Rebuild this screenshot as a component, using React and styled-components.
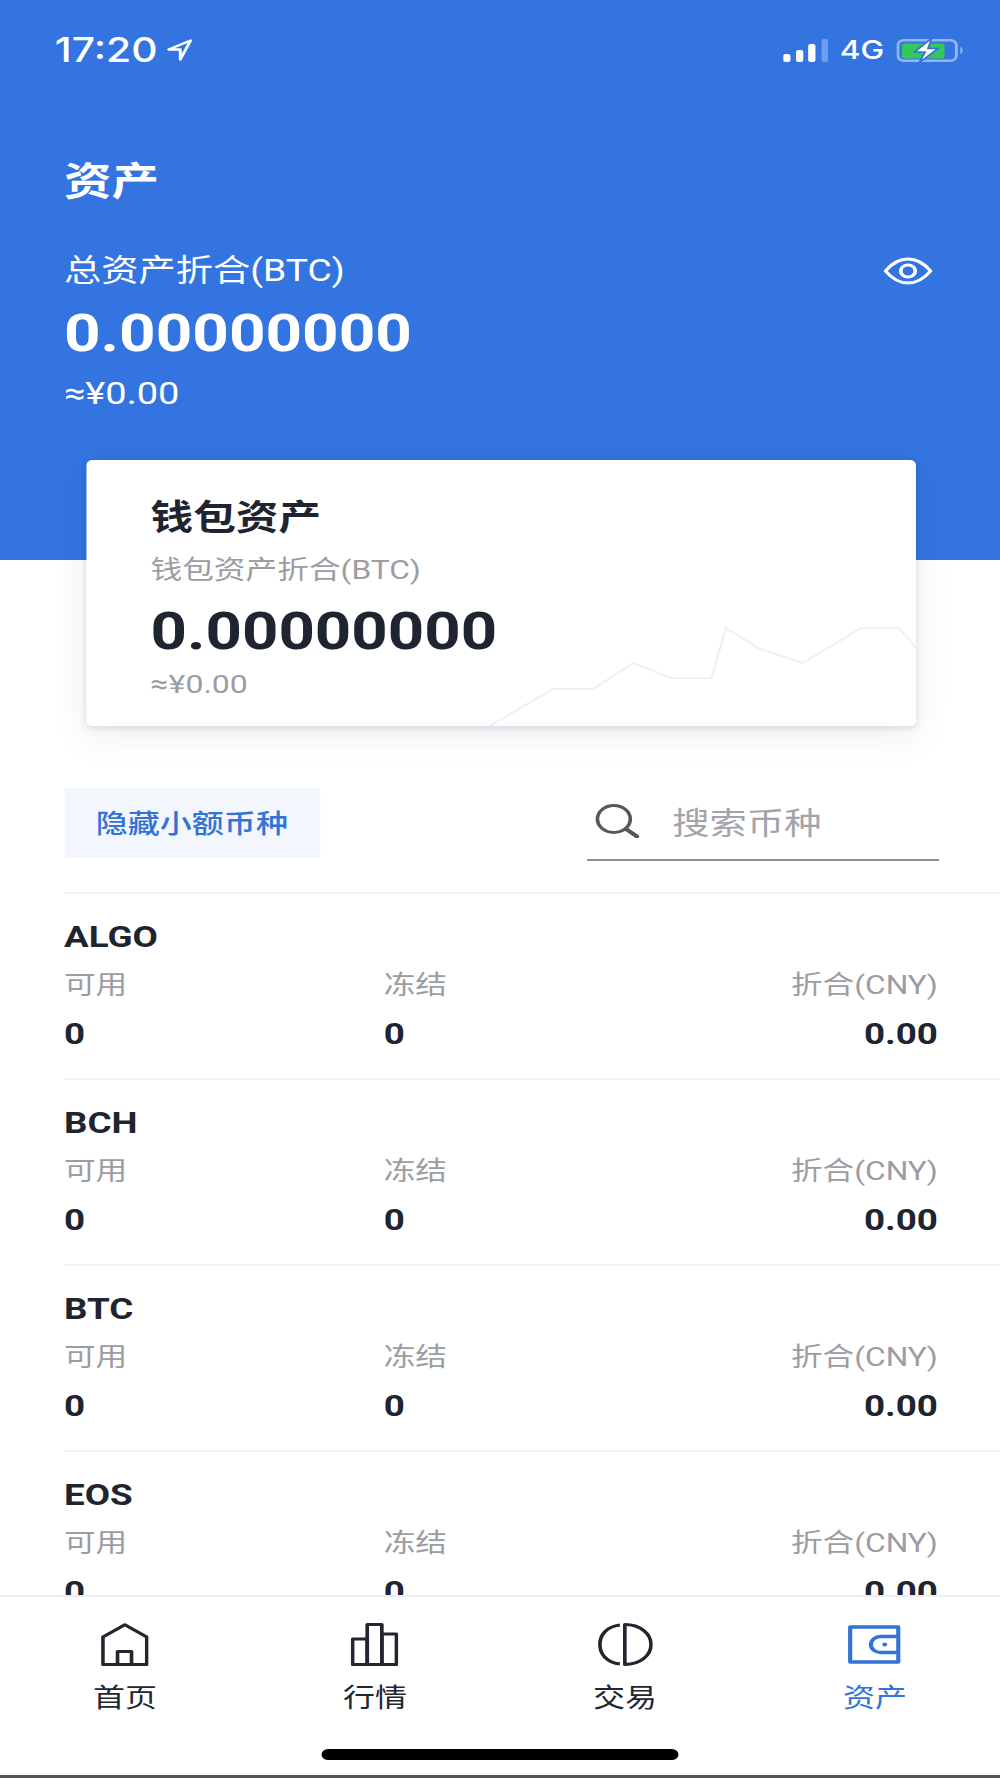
import React from "react";
import styled, { createGlobalStyle } from "styled-components";

const BLUE = "#3374e0";
const INK = "#1f2530";
const GREY = "#9b9da3";

const Global = createGlobalStyle`
  html, body { margin: 0; padding: 0; width: 1000px; height: 1778px; overflow: hidden; background: #fff; }
  * { box-sizing: border-box; }
`;

/* The capture is a phone screen stretched horizontally, so the whole screen is laid out narrow and widened once. */
const Screen = styled.div`
  width: calc(1000px / 1.218);
  height: 1778px;
  transform: scaleX(1.218);
  transform-origin: 0 0;
  display: flex;
  flex-direction: column;
  overflow: hidden;
  background: #fff;
  color: ${INK};
  font-family: Roboto, "Noto Sans CJK SC", sans-serif;
`;
const Main = styled.main`
  flex: 1;
  min-height: 0;
  overflow: hidden;
`;
const Header = styled.header`
  height: 560px;
  background: ${BLUE};
  color: #fff;
`;
const StatusBar = styled.div`
  height: 100px;
  padding: 0 29px 0 45px;
  display: flex;
  align-items: center;
  justify-content: space-between;
  font-family: Inter, sans-serif;
`;
const StatusGroup = styled.div`
  display: flex;
  align-items: center;
  gap: ${p => p.$gap}px;
`;
const Time = styled.span`
  font-size: 33.5px;
  font-weight: 500;
  line-height: 36px;
`;
const Network = styled.span`
  font-size: 26px;
  font-weight: 500;
  line-height: 30px;
`;
const Summary = styled.div`
  padding: 57px 55px 0 52.5px;
`;
const PageTitle = styled.h1`
  margin: 0;
  font-size: 39px;
  line-height: 50px;
  font-weight: 700;
`;
const SummaryRow = styled.div`
  margin-top: 44px;
  display: flex;
  justify-content: space-between;
  align-items: center;
  font-size: 30.6px;
  line-height: 40px;
`;
const SummaryValue = styled.div`
  margin-top: 11px;
  font-size: 52.4px;
  line-height: 62px;
  font-weight: 700;
`;
const SummaryFiat = styled.div`
  margin-top: 10px;
  font-size: 31.2px;
  line-height: 40px;
`;
const Card = styled.section`
  position: relative;
  width: 681px;
  height: 266px;
  padding: 34px 0 0 53px;
  background: #fff;
  border-radius: 5px;
  overflow: hidden;
`;
const CardShadow = styled.div`
  margin: -100px 0 0 70.6px;
  width: 681px;
  height: 266px;
  border-radius: 5px;
  box-shadow: 0 2px 6px rgba(30, 40, 70, 0.14), 0 10px 34px rgba(30, 40, 90, 0.08);
`;
const CardTitle = styled.h2`
  margin: 0;
  font-size: 35px;
  line-height: 50px;
  font-weight: 700;
`;
const CardLabel = styled.div`
  margin-top: 8px;
  font-size: 26px;
  line-height: 36px;
  color: ${GREY};
`;
const CardValue = styled.div`
  margin-top: 14px;
  font-size: 52.2px;
  line-height: 60px;
  font-weight: 700;
`;
const CardFiat = styled.div`
  margin-top: 7px;
  font-size: 26.3px;
  line-height: 30px;
  color: ${GREY};
`;
const Spark = styled.svg`
  position: absolute;
  left: 0;
  top: 0;
  width: 681px;
  height: 266px;
  pointer-events: none;
`;
const Toolbar = styled.div`
  margin-top: 62px;
  padding: 0 50px 0 52.5px;
  display: flex;
  justify-content: space-between;
  align-items: flex-start;
`;
const HideButton = styled.button`
  width: 210px;
  height: 70px;
  border: 0;
  padding: 0 0 4px;
  background: #f3f7fd;
  color: #3373d6;
  font: 500 26.3px Roboto, "Noto Sans CJK SC", sans-serif;
`;
const SearchBox = styled.label`
  width: 289px;
  height: 73px;
  padding: 0 0 6px 6px;
  display: flex;
  align-items: center;
  gap: 27px;
  border-bottom: 2px solid #8f9092;
  font-size: 30.6px;
  color: #a2a4a9;
`;
const List = styled.div`
  margin: 31px 0 0 52.5px;
`;
const Row = styled.article`
  height: 186px;
  padding: 25px 51px 0 0;
  border-top: 2px solid #f2f3f5;
`;
const Coin = styled.h3`
  margin: 0;
  font-size: 30.2px;
  line-height: 36px;
  font-weight: 700;
`;
const Columns = styled.div`
  margin-top: 12px;
  display: grid;
  grid-template-columns: 262.5px 1fr auto;
`;
const Col = styled.div`
  text-align: ${p => (p.$end ? "right" : "left")};
`;
const Label = styled.div`
  font-size: 26px;
  line-height: 36px;
  color: ${GREY};
`;
const Value = styled.div`
  margin-top: 13px;
  font-size: 30.2px;
  line-height: 36px;
  font-weight: 700;
`;
const TabBar = styled.nav`
  height: 183px;
  flex: none;
  border-top: 2px solid #eeeff1;
  background: #fff;
  display: flex;
  flex-direction: column;
`;
const Tabs = styled.div`
  display: flex;
  padding-top: 26px;
`;
const Tab = styled.div`
  flex: 1;
  display: flex;
  flex-direction: column;
  align-items: center;
  color: ${p => (p.$active ? "#3373d6" : "#23262e")};
`;
const TabIcon = styled.div`
  height: 43px;
  display: flex;
  align-items: center;
`;
const TabLabel = styled.span`
  margin-top: 14px;
  font-size: 26.3px;
  line-height: 36px;
`;
const HomeIndicator = styled.div`
  width: 293px;
  height: 11px;
  margin: 33px auto 0;
  border-radius: 6px;
  background: #000;
`;
const EdgeLine = styled.div`
  height: 3px;
  margin-top: auto;
  background: #555;
`;

const Signal = () => (
  <svg width="37" height="23" viewBox="0 0 37 23">
    <rect x="0" y="15" width="6" height="8" rx="2" fill="#fff" />
    <rect x="10.5" y="11" width="6" height="12" rx="2" fill="#fff" />
    <rect x="20.5" y="5" width="6" height="18" rx="2" fill="#fff" />
    <rect x="31.5" y="0" width="5.5" height="23" rx="2" fill="#6f9dec" />
  </svg>
);
const Battery = () => (
  <svg width="56" height="23" viewBox="0 0 56 23">
    <rect x="1.2" y="1.2" width="48" height="20.6" rx="5" fill="none" stroke="#93b6f1" strokeWidth="2.4" />
    <rect x="4.5" y="4.5" width="35" height="15" rx="2" fill="#34c759" />
    <path d="M52.5 8 C55 9 55 14 52.5 15Z" fill="#93b6f1" />
    <path d="M29 -1 L15 13 H23.5 L18.5 24 L34 9.5 H26 Z" fill="#fff" stroke={BLUE} strokeWidth="1.6" />
  </svg>
);
const Eye = () => (
  <svg width="41" height="28" viewBox="0 0 41 28" fill="none" stroke="#fff">
    <path d="M2 14 C9 4 15 2 20.5 2 C26 2 32 4 39 14 C32 24 26 26 20.5 26 C15 26 9 24 2 14Z" strokeWidth="3" strokeLinejoin="round" />
    <circle cx="20.5" cy="14" r="6" strokeWidth="3" />
  </svg>
);
const SearchIcon = () => (
  <svg width="37" height="34" viewBox="0 0 37 34" fill="none" stroke="#55575c" strokeWidth="3" strokeLinecap="round">
    <circle cx="16" cy="15" r="13.5" />
    <path d="M26 25 L35 32.5" strokeWidth="3.6" />
  </svg>
);
const tabStroke = { fill: "none", stroke: "currentColor", strokeWidth: 3, strokeLinejoin: "round" };
const HomeIcon = () => (
  <svg width="39" height="43" viewBox="0 0 39 43" {...tabStroke}>
    <path d="M19.5 1.8 L37.5 14 V41.5 H1.5 V14 Z" />
    <path d="M13.5 41.5 V28.5 H25 V41.5" />
  </svg>
);
const BarsIcon = () => (
  <svg width="39" height="43" viewBox="0 0 39 43" {...tabStroke}>
    <path d="M1.5 16 H13.5 V41.5 H1.5 Z" />
    <path d="M13.5 1.5 H25.5 V41.5 H13.5 Z" />
    <path d="M25.5 11 H37.5 V41.5 H25.5 Z" />
  </svg>
);
const TradeIcon = () => (
  <svg width="45" height="43" viewBox="0 0 45 43" {...tabStroke}>
    <path d="M22 1.5 V41.5 C35 41.5 43.5 32 43.5 21.5 C43.5 11 35 1.5 22 1.5 Z" />
    <path d="M18 2 C7 3.5 1.5 12 1.5 21.5 C1.5 31 7 39.5 18 41" />
  </svg>
);
const WalletIcon = () => (
  <svg width="44" height="39" viewBox="0 0 44 39" {...tabStroke} strokeWidth="3.4">
    <rect x="2" y="2" width="39.5" height="35" />
    <path d="M41.5 11.5 H27 A8 8 0 0 0 27 27.5 H41.5" />
    <circle cx="30.4" cy="19.6" r="2" fill="currentColor" stroke="none" />
  </svg>
);

const coins = ["ALGO", "BCH", "BTC", "EOS"];
const tabs = [
  { label: "首页", Icon: HomeIcon },
  { label: "行情", Icon: BarsIcon },
  { label: "交易", Icon: TradeIcon },
  { label: "资产", Icon: WalletIcon, active: true },
];

export default function App() {
  return (
    <>
      <Global />
      <Screen>
        <Main>
          <Header>
            <StatusBar>
              <StatusGroup $gap={8}>
                <Time>17:20</Time>
                <svg width="21" height="22" viewBox="0 0 21 22" fill="none" stroke="#fff" strokeWidth="2.4" strokeLinejoin="round">
                  <path d="M19.5 1.5 L1.5 10.5 H11 V20.5 Z" />
                </svg>
              </StatusGroup>
              <StatusGroup $gap={10}>
                <Signal />
                <Network>4G</Network>
                <Battery />
              </StatusGroup>
            </StatusBar>
            <Summary>
              <PageTitle>资产</PageTitle>
              <SummaryRow>
                <span>总资产折合(BTC)</span>
                <Eye />
              </SummaryRow>
              <SummaryValue>0.00000000</SummaryValue>
              <SummaryFiat>≈¥0.00</SummaryFiat>
            </Summary>
          </Header>
          <CardShadow>
            <Card>
              <Spark viewBox="0 0 681 266" fill="none" stroke="#eff0fa" strokeWidth="2">
                <path d="M331 266 L383 229 L416 229 L449 203 L480 218 L513 218 L525 168 L553 189 L588 203 L636 168 L667 168 L681 188" />
              </Spark>
              <CardTitle>钱包资产</CardTitle>
              <CardLabel>钱包资产折合(BTC)</CardLabel>
              <CardValue>0.00000000</CardValue>
              <CardFiat>≈¥0.00</CardFiat>
            </Card>
          </CardShadow>
          <Toolbar>
            <HideButton>隐藏小额币种</HideButton>
            <SearchBox>
              <SearchIcon />
              <span>搜索币种</span>
            </SearchBox>
          </Toolbar>
          <List>
            {coins.map(coin => (
              <Row key={coin}>
                <Coin>{coin}</Coin>
                <Columns>
                  <Col>
                    <Label>可用</Label>
                    <Value>0</Value>
                  </Col>
                  <Col>
                    <Label>冻结</Label>
                    <Value>0</Value>
                  </Col>
                  <Col $end>
                    <Label>折合(CNY)</Label>
                    <Value>0.00</Value>
                  </Col>
                </Columns>
              </Row>
            ))}
          </List>
        </Main>
        <TabBar>
          <Tabs>
            {tabs.map(({ label, Icon, active }) => (
              <Tab key={label} $active={active}>
                <TabIcon>
                  <Icon />
                </TabIcon>
                <TabLabel>{label}</TabLabel>
              </Tab>
            ))}
          </Tabs>
          <HomeIndicator />
          <EdgeLine />
        </TabBar>
      </Screen>
    </>
  );
}
